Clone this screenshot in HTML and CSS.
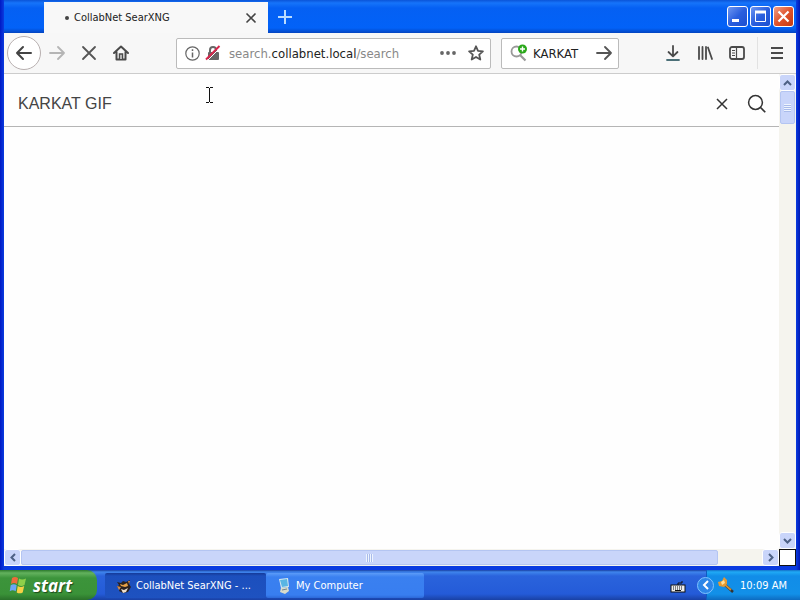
FILE: index.html
```html
<!DOCTYPE html>
<html lang="en">
<head>
    <meta charset="UTF-8">
    <meta name="viewport" content="width=device-width, initial-scale=1.0">
    <title>CollabNet SearXNG</title>
    <link rel="stylesheet" href="styles.css">
</head>
<body>
    <div class="window">
        <header class="titlebar">
            <div class="tab">
                <span class="tab-dot"></span>
                <span class="tab-title">CollabNet SearXNG</span>
                <button class="tab-close" aria-label="Close tab">
                    <svg width="12" height="12" viewBox="0 0 12 12"><path d="M1.5 1.5l9 9M10.5 1.5l-9 9" stroke="#444" stroke-width="1.6"/></svg>
                </button>
            </div>
            <button class="new-tab" aria-label="New tab">
                <svg width="14" height="14" viewBox="0 0 14 14"><path d="M7 0v14M0 7h14" stroke="#b9dcff" stroke-width="2"/></svg>
            </button>
            <div class="caption-buttons">
                <button class="caption" aria-label="Minimize">
                    <svg width="19" height="19" viewBox="0 0 19 19"><path d="M4 13.5h7" stroke="#fff" stroke-width="3"/></svg>
                </button>
                <button class="caption" aria-label="Maximize">
                    <svg width="19" height="19" viewBox="0 0 19 19"><path d="M4.5 4v10.5h10V4" fill="none" stroke="#fff"/><path d="M4 5h11" stroke="#fff" stroke-width="3"/></svg>
                </button>
                <button class="caption caption-close" aria-label="Close">
                    <svg width="19" height="19" viewBox="0 0 19 19"><path d="M4.5 4.5l10 10M14.5 4.5l-10 10" stroke="#fff" stroke-width="2.2"/></svg>
                </button>
            </div>
        </header>

        <nav class="toolbar">
            <button class="back" aria-label="Back">
                <svg width="18" height="16" viewBox="0 0 18 16"><path d="M16 8H2M8 2L2 8l6 6" fill="none" stroke="#444" stroke-width="2" stroke-linecap="round" stroke-linejoin="round"/></svg>
            </button>
            <button class="tool" aria-label="Forward">
                <svg width="16" height="16" viewBox="0 0 16 16"><path d="M1 8h14M9 2l6 6-6 6" fill="none" stroke="#b5b5b5" stroke-width="1.8" stroke-linecap="round" stroke-linejoin="round"/></svg>
            </button>
            <button class="tool" aria-label="Stop">
                <svg width="16" height="16" viewBox="0 0 16 16"><path d="M2 2l12 12M14 2L2 14" stroke="#555" stroke-width="1.8" stroke-linecap="round"/></svg>
            </button>
            <button class="tool" aria-label="Home">
                <svg width="16" height="16" viewBox="0 0 16 16"><path d="M1 8l7-6.5L15 8M3.5 7v7.500h9V7" fill="none" stroke="#4a4a4a" stroke-width="2" stroke-linecap="round" stroke-linejoin="round"/><path d="M6.5 14V9h3v5" fill="#ddd" stroke="#4a4a4a" stroke-width="1.5"/></svg>
            </button>

            <div class="urlbar">
                <svg width="15" height="15" viewBox="0 0 15 15"><circle cx="7.5" cy="7.5" r="6.7" fill="none" stroke="#666" stroke-width="1.2"/><path d="M7.5 6.5v5M7.5 3.300v1.700" stroke="#666" stroke-width="1.5"/></svg>
                <svg class="lock" width="16" height="16" viewBox="0 0 16 16"><path d="M5 8V5a3 3 0 0 1 6 0v3" fill="none" stroke="#666" stroke-width="2"/><rect x="3" y="7" width="11" height="8" rx="1" fill="#666"/><path d="M2.500 15.500l13-13" stroke="#fff" stroke-width="1"/><path d="M1 14.5L14.5 1" stroke="#d7264c" stroke-width="2"/></svg>
                <a class="url" href="#">search.<span class="domain">collabnet.local</span>/search</a>
                <button class="bar-button" aria-label="Page actions">
                    <svg width="16" height="6" viewBox="0 0 16 6"><circle cx="2" cy="3" r="1.9" fill="#666"/><circle cx="8" cy="3" r="1.9" fill="#666"/><circle cx="14" cy="3" r="1.9" fill="#666"/></svg>
                </button>
                <button class="bar-button" aria-label="Bookmark this page">
                    <svg width="16" height="16" viewBox="0 0 16 16"><path d="M8 1.3l2 4.5 4.9.5-3.7 3.3 1.1 4.9L8 12l-4.300 2.500 1.100-4.900L1.1 6.3 6 5.800z" fill="none" stroke="#555" stroke-width="1.8" stroke-linejoin="round"/></svg>
                </button>
            </div>

            <div class="searchbar">
                <svg width="18" height="18" viewBox="0 0 18 18"><circle cx="6.5" cy="7.5" r="5" fill="none" stroke="#999" stroke-width="1.8"/><path d="M10 11l5.500 5.500" stroke="#999" stroke-width="2.2"/><circle cx="12.5" cy="5" r="4.5" fill="#2aa81a"/><path d="M12.5 2.500v5M10 5h5" stroke="#fff" stroke-width="1.4"/></svg>
                <input class="search-text" type="text" value="KARKAT" aria-label="Search the web">
                <button class="bar-button" aria-label="Go">
                    <svg width="16" height="16" viewBox="0 0 16 16"><path d="M1 8h14M9 2l6 6-6 6" fill="none" stroke="#555" stroke-width="1.8" stroke-linecap="round" stroke-linejoin="round"/></svg>
                </button>
            </div>

            <button class="tool" aria-label="Downloads">
                <svg width="16" height="16" viewBox="0 0 16 16"><path d="M8 1v10M3.500 7L8 11.300 12.500 7" fill="none" stroke="#4a4a4a" stroke-width="1.8" stroke-linecap="round" stroke-linejoin="round"/><path d="M2 15h12" stroke="#4c7078" stroke-width="1.8" stroke-linecap="round"/></svg>
            </button>
            <button class="tool" aria-label="Library">
                <svg width="16" height="16" viewBox="0 0 16 16"><path d="M2 2v12M5.500 2v12M9 2v12M11 2.500l4 11.500" stroke="#4a4a4a" stroke-width="1.8" stroke-linecap="round"/></svg>
            </button>
            <button class="tool" aria-label="Sidebar">
                <svg width="16" height="16" viewBox="0 0 16 16"><rect x="1" y="2" width="14" height="12" rx="2" fill="none" stroke="#4a4a4a" stroke-width="1.8"/><path d="M7.500 2v12M3 5.500h3M3 8h3M3 10.500h3" stroke="#4a4a4a" stroke-width="1.2"/></svg>
            </button>
            <span class="separator"></span>
            <button class="tool" aria-label="Menu">
                <svg width="14" height="14" viewBox="0 0 14 14"><path d="M1 2h12M1 7h12M1 12h12" stroke="#4a4a4a" stroke-width="2"/></svg>
            </button>
        </nav>

        <div class="viewport">
            <main class="page">
                <form class="search-form">
                    <input class="query" type="text" value="KARKAT GIF" aria-label="Search for">
                    <button class="form-button" type="reset" aria-label="Clear">
                        <svg width="14" height="14" viewBox="0 0 14 14"><path d="M2 2l10 10M12 2L2 12" stroke="#333" stroke-width="1.5"/></svg>
                    </button>
                    <button class="form-button" type="submit" aria-label="Search">
                        <svg width="20" height="20" viewBox="0 0 20 20"><circle cx="8.5" cy="8.5" r="6.9" fill="none" stroke="#333" stroke-width="1.5"/><path d="M13.3 13.3l5 5" stroke="#333" stroke-width="1.6"/></svg>
                    </button>
                </form>
            </main>
            <div class="scroll scroll-y">
                <button class="arrow" aria-label="Scroll up"><svg width="9" height="6" viewBox="0 0 9 6"><path d="M1 5l3.500-3.500L8 5" fill="none" stroke="#4d6185" stroke-width="2"/></svg></button>
                <div class="thumb thumb-y"><span class="grip"></span></div>
                <button class="arrow arrow-end" aria-label="Scroll down"><svg width="9" height="6" viewBox="0 0 9 6"><path d="M1 1l3.500 3.500L8 1" fill="none" stroke="#4d6185" stroke-width="2"/></svg></button>
            </div>
            <div class="scroll scroll-x">
                <button class="arrow" aria-label="Scroll left"><svg width="6" height="9" viewBox="0 0 6 9"><path d="M5 1L1.500 4.500 5 8" fill="none" stroke="#4d6185" stroke-width="2"/></svg></button>
                <div class="track-x"><div class="thumb thumb-x"><span class="grip grip-x"></span></div></div>
                <button class="arrow" aria-label="Scroll right"><svg width="6" height="9" viewBox="0 0 6 9"><path d="M1 1l3.500 3.500L1 8" fill="none" stroke="#4d6185" stroke-width="2"/></svg></button>
            </div>
            <div class="corner"></div>
        </div>
    </div>

    <footer class="taskbar">
        <button class="start">
            <svg width="20" height="20" viewBox="0 0 20 20"><path d="M3 3q3-2 6 0L8 9Q5 7 2 9z" fill="#ee6b3b"/><path d="M10 3.500q3 2 7 0L15.500 10q-3 2-6.500 0z" fill="#8fd04a"/><path d="M1.700 10.200q3-2 6 0l-1 6q-3-2-6 0z" fill="#6da5f5"/><path d="M8.700 11q3 2 6.500 0l-1.500 6.500q-3 1.700-6 0z" fill="#f7d046"/></svg>
            start
        </button>
        <button class="task task-active">
            <svg width="16" height="16" viewBox="0 0 16 16"><path d="M1 4l4 1 2-2 3 1 4-2-1 4 2 3-3 5-5 1-4-2 1-3-3-1 2-2z" fill="#2a2220"/><path d="M4 6l3 1 4-2 1 3-3 1-4-1z" fill="#e8a246"/><path d="M5 11l3 1 4-2-2 4-3 1z" fill="#efe0cc"/><path d="M1 8l4 1-2 3zM12 3l2 0-1 3z" fill="#d68a42"/></svg>
            <span>CollabNet SearXNG - ...</span>
        </button>
        <button class="task">
            <svg width="16" height="16" viewBox="0 0 16 16"><path d="M3 1l9-1 1 9-8 1z" fill="#d8e8ee"/><path d="M4 2l7-1 1 7-6 1z" fill="#59b5e3"/><path d="M5 10l7-1 1 4-4 3-5-2z" fill="#d8dccb"/><path d="M6 12l5-1" stroke="#728390"/></svg>
            <span>My Computer</span>
        </button>
        <svg class="keyboard" width="16" height="12" viewBox="0 0 16 12"><path d="M8 4V2h4V0" fill="none" stroke="#111"/><rect x="1" y="4" width="14" height="7" fill="#eee" stroke="#111"/><path d="M3 6h10M3 8h10" stroke="#111" stroke-dasharray="1 1"/><path d="M5 9.500h6" stroke="#111"/></svg>
        <div class="tray">
            <button class="tray-toggle" aria-label="Show hidden icons"><svg width="7" height="10" viewBox="0 0 7 10"><path d="M6 1L2 5l4 4" fill="none" stroke="#fff" stroke-width="2"/></svg></button>
            <svg width="18" height="18" viewBox="0 0 18 18"><path d="M8 8l9 8" stroke="#333" stroke-width="2.5"/><path d="M7 7l8 7" stroke="#c98c37" stroke-width="2"/><path d="M2 6l4-1 2-4 3 3 0 4-3 3-5-1z" fill="#e59a32"/><path d="M5 6l3-2 1 3-3 2z" fill="#ffe09a"/></svg>
            <span class="clock">10:09 AM</span>
        </div>
    </footer>

    <svg class="cursor" width="9" height="18" viewBox="0 0 9 18"><path d="M1 1.500h3M5 1.500h3M4.500 2v14M1 16.500h3M5 16.500h3" stroke="#111"/></svg>
</body>
</html>
```
FILE: styles.css
```css
* {
    box-sizing: border-box;
}
body {
    margin: 0;
    height: 100vh;
    display: flex;
    flex-direction: column;
    font-family: "DejaVu Sans Condensed", "DejaVu Sans", sans-serif;
    font-size: 11px;
    color: #222;
    background-color: #0a4be0;
}
button {
    display: flex;
    align-items: center;
    justify-content: center;
    flex-shrink: 0;
    padding: 0;
    border: none;
    background: none;
    font-family: inherit;
    font-size: inherit;
}
input {
    min-width: 0;
    padding: 0;
    border: none;
    outline: none;
    background: none;
    font-family: inherit;
    color: inherit;
}
svg {
    display: block;
    flex-shrink: 0;
}
.window {
    flex: 1;
    min-height: 0;
    display: flex;
    flex-direction: column;
    padding: 0 4px 4px;
    background: linear-gradient(to right, #0019c4, #0a3be0 4px, #0a3be0 calc(100% - 4px), #0019b4);
}

/* Title bar */
.titlebar {
    display: flex;
    height: 33px;
    padding: 2px 2px 0 40px;
    background: linear-gradient(#0b54d8, #1674fa 3px, #0560f3 8px, #0262f8 28px, #0344c0);
}
.tab {
    display: flex;
    align-items: center;
    width: 224px;
    padding: 0 11px 0 21px;
    background-color: #f8f8f8;
}
.tab-dot {
    width: 4px;
    height: 4px;
    margin-right: 5px;
    border-radius: 50%;
    background-color: #444;
}
.tab-title {
    flex: 1;
}
.new-tab {
    width: 34px;
    height: 29px;
}
.caption-buttons {
    display: flex;
    gap: 2px;
    margin-left: auto;
    padding-top: 4px;
}
.caption {
    width: 21px;
    height: 21px;
    border: 1px solid #fff;
    border-radius: 3px;
    background: linear-gradient(135deg, #6e97f2, #2a5fde 50%, #1b4fd0);
}
.caption-close {
    background: linear-gradient(135deg, #f0a088, #e0532c 50%, #c63a12);
}

/* Navigation toolbar */
.toolbar {
    display: flex;
    align-items: center;
    height: 41px;
    padding: 0 3px;
    border-bottom: 1px solid #ccc;
    background-color: #f7f7f7;
}
.back {
    width: 34px;
    height: 34px;
    border: 1px solid #b8b0b0;
    border-radius: 50%;
    background-color: #fff;
}
.tool {
    width: 32px;
    height: 32px;
}
.urlbar,
.searchbar {
    display: flex;
    align-items: center;
    height: 31px;
    border: 1px solid #bbb;
    border-radius: 2px;
    background-color: #fff;
}
.urlbar {
    flex: 1;
    min-width: 0;
    margin-left: 39px;
    padding: 0 6px 0 8px;
}
.lock {
    margin: 0 8px 0 5px;
}
.url {
    flex: 1;
    font-size: 13px;
    color: #888;
    text-decoration: none;
}
.domain {
    color: #222;
}
.bar-button {
    width: 16px;
    height: 24px;
}
.bar-button + .bar-button {
    margin-left: 12px;
}
.searchbar {
    width: 118px;
    margin: 0 38px 0 10px;
    padding: 0 6px 0 8px;
}
.search-text {
    flex: 1;
    margin-left: 5px;
    font-size: 13px;
}
.separator {
    width: 1px;
    height: 32px;
    margin: 0 3px 0 4px;
    background-color: #e2e2e2;
}

/* Page and scrollbars */
.viewport {
    flex: 1;
    min-height: 0;
    display: grid;
    grid-template-columns: 1fr 17px;
    grid-template-rows: 1fr 17px;
    background-color: #fff;
}
.page {
    min-width: 0;
    background-color: #fefefe;
}
.search-form {
    display: flex;
    align-items: center;
    height: 53px;
    padding: 8px 12px 0 14px;
    border-bottom: 1px solid #b5b5b5;
}
.query {
    flex: 1;
    font-family: "Liberation Sans", Arial, sans-serif;
    font-size: 16px;
    color: #444;
}
.form-button {
    width: 20px;
    height: 32px;
}
.form-button + .form-button {
    margin-left: 15px;
}
.scroll {
    display: flex;
    background-color: #f5f4ee;
}
.scroll-y {
    flex-direction: column;
}
.arrow {
    width: 17px;
    height: 17px;
    border: 1px solid #fff;
    border-radius: 3px;
    background-color: #c9d5fa;
}
.arrow-end {
    margin-top: auto;
}
.thumb {
    display: flex;
    align-items: center;
    justify-content: center;
    border: 1px solid #b4c5f2;
    border-radius: 2px;
    background-color: #c9d5fa;
}
.thumb-y {
    height: 33px;
    margin: 0 1px;
}
.track-x {
    flex: 1;
    padding: 1px 0;
}
.thumb-x {
    width: 94%;
    height: 100%;
}
.grip {
    width: 7px;
    height: 8px;
    background: repeating-linear-gradient(#eef4fe 0 1px, #a9bbea 1px 2px);
}
.grip-x {
    background: repeating-linear-gradient(to right, #eef4fe 0 1px, #a9bbea 1px 2px);
}
.corner {
    border: 1px solid #111;
    background-color: #fff;
}

/* Taskbar */
.taskbar {
    display: flex;
    height: 30px;
    color: #fff;
    background: linear-gradient(#1941a5, #3f85ec 2px, #2a63dc 6px, #245bd8 24px, #1941a5);
}
.start {
    width: 97px;
    gap: 4px;
    padding-right: 16px;
    border-radius: 0 10px 10px 0;
    font-family: "Open Sans", sans-serif;
    font-size: 17px;
    font-weight: bold;
    font-style: italic;
    color: #fff;
    text-shadow: 1px 1px 1px #1d4a1d;
    background: linear-gradient(#2c7a2c, #63b25e 3px, #3c943b 8px, #3a9238 24px, #2a702a);
}
.task {
    width: 158px;
    height: 25px;
    margin-top: 3px;
    justify-content: flex-start;
    gap: 4px;
    padding-left: 10px;
    border-radius: 2px;
    color: #fff;
    background: linear-gradient(#5c9cf8, #3a80f0 4px, #387ef0 22px, #2c68d8);
}
.task-active {
    width: 161px;
    margin-left: 8px;
    padding-left: 11px;
    background: linear-gradient(#153a98, #1c4fbd 3px, #1e52c0);
}
.keyboard {
    margin: 11px 20px 0 auto;
}
.tray {
    display: flex;
    align-items: center;
    gap: 2px;
    padding-right: 13px;
    border-left: 1px solid #0f5cc0;
    background: linear-gradient(#1470c8, #20aaf5 2px, #118de8 6px, #1290e8 24px, #0d6bc0);
}
.tray-toggle {
    width: 17px;
    height: 17px;
    margin-left: -10px;
    border: 1px solid #7fc4ff;
    border-radius: 50%;
    background-color: #2c86e8;
}
.clock {
    margin-left: 4px;
}

/* Text pointer */
.cursor {
    position: absolute;
    left: 205px;
    top: 86px;
}
```
